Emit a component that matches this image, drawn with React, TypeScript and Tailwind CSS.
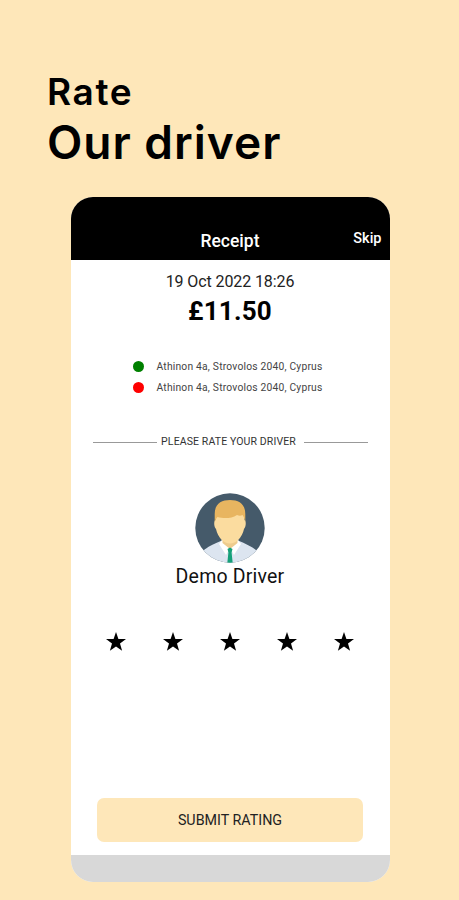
const ADDRESSES = [
  { dot: "bg-[#008000]", text: "Athinon 4a, Strovolos 2040, Cyprus" },
  { dot: "bg-[#fe0000]", text: "Athinon 4a, Strovolos 2040, Cyprus" },
];

function Avatar() {
  return (
    <svg viewBox="0 0 70 70" className="h-[70px] w-[70px]" aria-label="Driver">
      <defs>
        <clipPath id="disc">
          <circle cx="35" cy="35" r="34.7" />
        </clipPath>
      </defs>
      <g clipPath="url(#disc)">
        <rect width="70" height="70" fill="#455a6a" />
        <path d="M4 70 L8 58 C12 54 19 51 27 47.500 H43 C51 51 58 54 62 58 L66 70 Z" fill="#dce5f0" />
        <path d="M27 47 L24 51 L31 62 L35 55 L39 62 L46 51 L43 47 Z" fill="#fff" />
        <path d="M27.500 42 H42.500 V50 L35 56 L27.500 50 Z" fill="#edcb8e" />
        <path d="M20.500 20 H49.500 V27 C51.500 28 51 34 49 36 C47 45 41 50.500 35 50.500 C29 50.500 23 45 21 36 C19 34 18.500 28 20.500 27 Z" fill="#fbdc9f" />
        <path d="M19.700 29 V21 C19.700 11 26 7 35 7 C44 7 50.300 11 50.300 21 V29 C49.800 26 49 24 47.500 22 C46 23 44 23 42 22 C36 26 28 25.500 22.500 24 C21 25.500 20.500 27 19.700 29 Z" fill="#e8b560" />
        <path d="M32.500 56 L35 54.500 L37.500 56 L36.600 59.500 L37.700 70 H32.300 L33.400 59.500 Z" fill="#16a079" />
      </g>
    </svg>
  );
}

function Star() {
  return (
    <svg viewBox="0 0 20 19" className="h-[19px] w-5" aria-hidden="true">
      <path d="M10 0 L12.400 6.900 L20 7 L14 11.600 L16.100 18.700 L10 14.600 L3.900 18.700 L6 11.600 L0 7 L7.600 6.900 Z" fill="#000" />
    </svg>
  );
}

export default function App() {
  return (
    <main className="flex h-[900px] w-[459px] flex-col overflow-hidden bg-[#fee7b9] font-[Roboto,sans-serif] text-black">
      <h1 className="flex h-[197px] shrink-0 flex-col pt-[71px] pl-[47px] font-[Inter,sans-serif] font-semibold whitespace-nowrap">
        <span className="text-[37px] leading-[42px] tracking-[1.6px]">Rate</span>
        <span className="mt-[2px] text-[46px] leading-[54px] tracking-[1px]">Our driver</span>
      </h1>

      <section className="ml-[70.5px] flex h-[685px] w-[319px] shrink-0 flex-col overflow-hidden rounded-[22px] bg-white whitespace-nowrap">
        <header className="grid h-[63px] shrink-0 grid-cols-3 bg-black pt-[34px] text-white">
          <span />
          <span className="text-center text-[17.5px] leading-[21px] font-medium">Receipt</span>
          <button className="mr-[8px] self-start justify-self-end text-[14.5px] leading-4 font-medium">Skip</button>
        </header>

        <div className="flex flex-col items-center pt-[12px]">
          <time className="text-[16px] leading-5 text-[#222] tracking-[-0.1px]">19 Oct 2022 18:26</time>
          <strong className="mt-1 text-[26px] leading-[30px] font-bold tracking-[0.2px]">£11.50</strong>
        </div>

        <ul className="mt-[29.5px] ml-[62px] flex flex-col">
          {ADDRESSES.map((a, i) => (
            <li key={i} className="flex h-[21.5px] items-center gap-[13px]">
              <i className={`h-[11px] w-[11px] rounded-full ${a.dot}`} />
              <span className="text-[10.3px] tracking-[0.2px] text-[#444]">{a.text}</span>
            </li>
          ))}
        </ul>

        <div className="mt-[35.5px] flex h-4 items-center px-[22px]">
          <i className="h-px w-[64px] bg-[#999]" />
          <span className="flex-1 pr-[3px] text-center text-[10.5px] tracking-[0.12px] text-[#333]">PLEASE RATE YOUR DRIVER</span>
          <i className="h-px w-[64px] bg-[#999]" />
        </div>

        <div className="mt-[43px] flex flex-col items-center">
          <Avatar />
          <span className="mt-0.5 text-[19.5px] leading-6 tracking-[0.2px] text-[#111]">Demo Driver</span>
        </div>

        <div className="mt-[42.5px] flex justify-between pr-[36px] pl-[35.5px]">
          {[1, 2, 3, 4, 5].map((n) => (
            <Star key={n} />
          ))}
        </div>

        <button className="mx-[26.5px] mt-auto mb-[13px] h-[44px] shrink-0 rounded-[7px] bg-[#fee7b9] pt-[2px] text-[14.3px] text-[#222]">
          SUBMIT RATING
        </button>
        <footer className="h-[27px] shrink-0 bg-[#d8d8d8]" />
      </section>
    </main>
  );
}
